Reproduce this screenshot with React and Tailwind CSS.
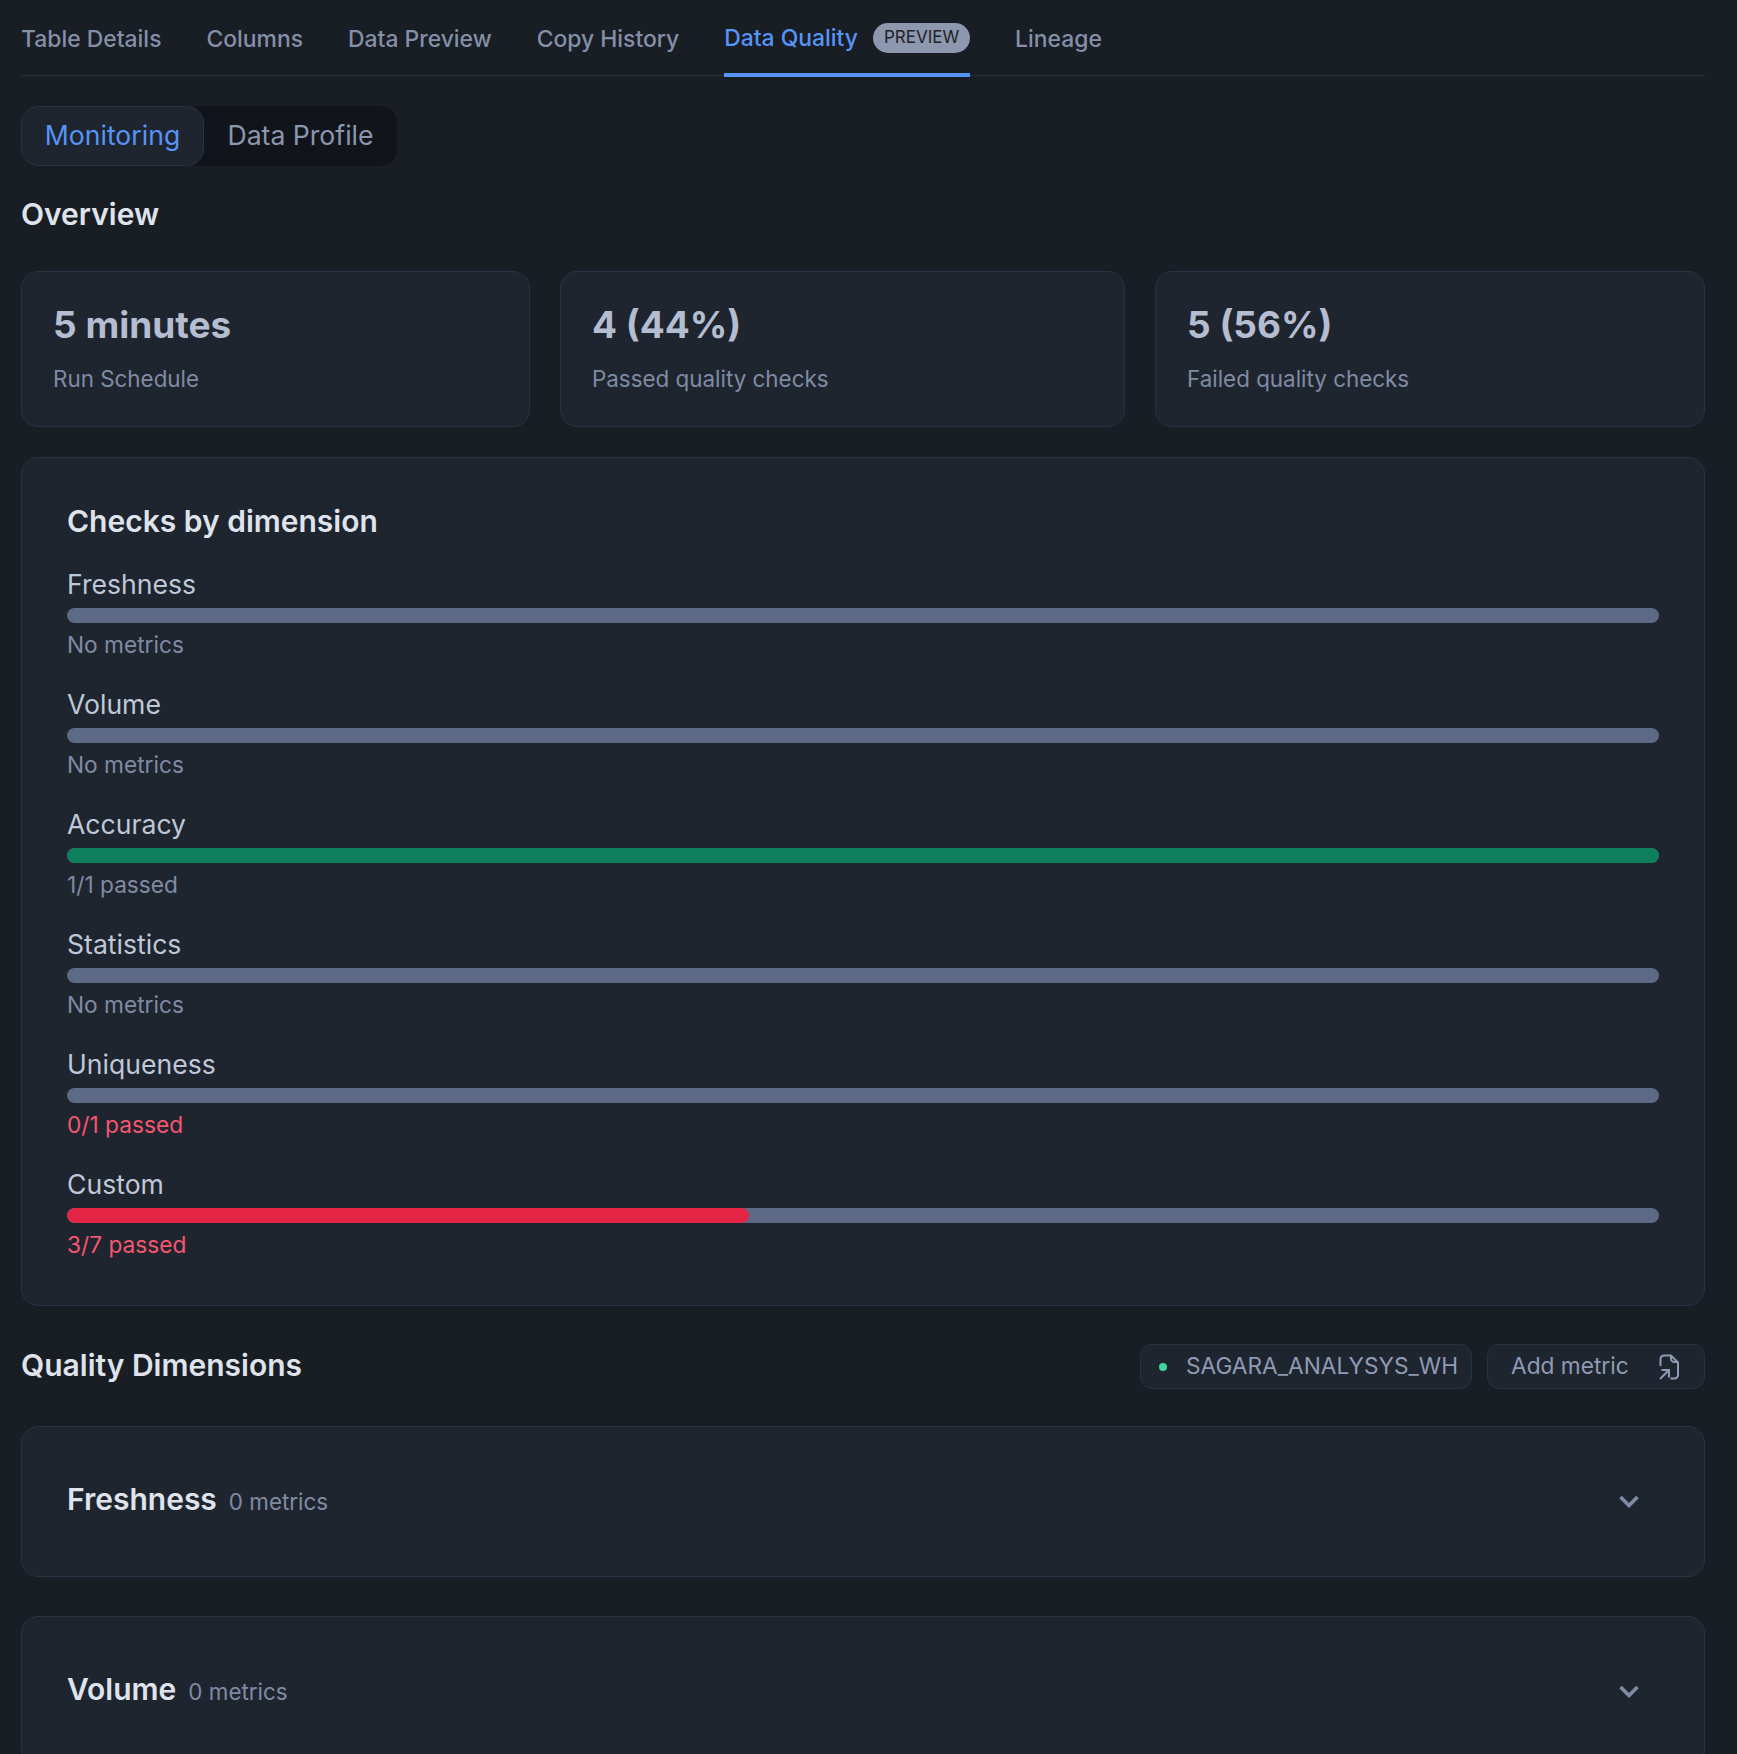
import React from 'react'

const tabs = ['Table Details', 'Columns', 'Data Preview', 'Copy History']

const stats = [
  { value: '5 minutes', label: 'Run Schedule', width: 'w-[509px]' },
  { value: '4 (44%)', label: 'Passed quality checks', width: 'w-[565px]' },
  { value: '5 (56%)', label: 'Failed quality checks', width: 'flex-1' }
]

const dimensions = [
  { name: 'Freshness', note: 'No metrics' },
  { name: 'Volume', note: 'No metrics' },
  { name: 'Accuracy', note: '1/1 passed', fill: 100, color: 'bg-[#0d7f5c]' },
  { name: 'Statistics', note: 'No metrics' },
  { name: 'Uniqueness', note: '0/1 passed', failed: true },
  { name: 'Custom', note: '3/7 passed', failed: true, fill: 42.86, color: 'bg-[#e42545]' }
]

const DimensionRow = ({ name, note, fill, color, failed }) => (
  <div>
    <div className="text-[26.6px] leading-[26px] text-[#bfc8d8]">{name}</div>
    <div className="mt-[11px] h-[15px] rounded-full bg-[#5c6a85] overflow-hidden">
      {fill && <div className={`h-full rounded-full ${color}`} style={{ width: `${fill}%` }} />}
    </div>
    <div className={`mt-[9px] text-[22.7px] leading-[26px] ${failed ? 'text-[#f4566f]' : 'text-[#7f8ba3]'}`}>{note}</div>
  </div>
)

const MetricSection = ({ name, count }) => (
  <section className="h-[151px] mb-[39px] rounded-[17px] border border-[#2a3142] bg-[#1f252f] pl-[45px] pr-[65px] flex items-center justify-between">
    <div className="flex items-baseline gap-[12px] pb-[5px]">
      <h3 className="text-[30px] leading-[40px] font-semibold text-[#dfe3ec]">{name}</h3>
      <span className="text-[22.4px] text-[#7f8ba3]">{count} metrics</span>
    </div>
    <svg width="20" height="13" viewBox="0 0 20 13" fill="none" stroke="#7f8aa3" strokeWidth="3.6">
      <path d="M1.500 2l8.500 8.500L18.500 2" />
    </svg>
  </section>
)

export default function App() {
  return (
    <div className="h-[1754px] overflow-hidden bg-[#191d24] pl-[21px] pr-[32px] font-['Inter',sans-serif]">
      {/* Top tabs */}
      <div className="flex h-[76px] gap-[45px] border-b border-[#2b303b] text-[22.9px] font-medium text-[#8390a8]">
        {tabs.map((tab) => (
          <div key={tab} className="flex h-[77px] items-center pt-[2px]">{tab}</div>
        ))}
        <div className="flex h-[77px] items-center gap-[15px] border-b-4 border-[#5794f7] pt-[4px] text-[#5794f7]">
          Data Quality
          <span className="-mt-[2px] flex h-[30px] w-[97px] items-center justify-center rounded-full bg-[#8d97ad] text-[17px] font-normal text-[#1d222b]">
            PREVIEW
          </span>
        </div>
        <div className="flex h-[77px] items-center pt-[2px]">Lineage</div>
      </div>

      {/* Sub tabs */}
      <div className="mt-[30px] flex h-[60px] w-[376px] rounded-[17px] bg-[#11151b] text-[26.6px]">
        <div className="flex w-[183px] items-center justify-center rounded-[17px] border border-[#2a3142] bg-[#1f252f] text-[#5794f7]">
          Monitoring
        </div>
        <div className="flex flex-1 items-center justify-center text-[#8c97ad]">Data Profile</div>
      </div>

      <h2 className="mt-[28px] mb-[37px] text-[30px] leading-[40px] font-semibold text-[#dfe3ec]">Overview</h2>

      <div className="flex gap-[30px]">
        {stats.map((stat) => (
          <div key={stat.label} className={`${stat.width} h-[156px] rounded-[17px] border border-[#2a3142] bg-[#1f252f] pt-[33px] pl-[31px]`}>
            <div className="text-[37px] leading-[40px] font-bold text-[#b5bdd0]">{stat.value}</div>
            <div className="mt-[20px] text-[22.4px] leading-[28px] text-[#7f8ba3]">{stat.label}</div>
          </div>
        ))}
      </div>

      {/* Checks by dimension */}
      <div className="mt-[30px] rounded-[17px] border border-[#2a3142] bg-[#1f252f] px-[45px] pt-[43px] pb-[47px]">
        <h2 className="mb-[30px] text-[30px] leading-[40px] font-semibold text-[#dfe3ec]">Checks by dimension</h2>
        <div className="flex flex-col gap-[33px]">
          {dimensions.map((d) => (
            <DimensionRow key={d.name} {...d} />
          ))}
        </div>
      </div>

      {/* Quality dimensions */}
      <div className="mt-[38px] mb-[37px] flex h-[45px] items-center justify-between">
        <h2 className="pb-[3px] text-[30px] leading-[40px] font-semibold text-[#dfe3ec]">Quality Dimensions</h2>
        <div className="flex gap-[15px] text-[22.7px] text-[#8f9bb5]">
          <div className="flex h-[45px] w-[332px] items-center rounded-[12px] border border-[#2a3142] bg-[#1f252f] pl-[18px]">
            <span className="h-[8px] w-[8px] shrink-0 rounded-full bg-[#3fd6a0]" />
            <span className="ml-[19px]">SAGARA_ANALYSYS_WH</span>
          </div>
          <div className="flex h-[45px] w-[218px] items-center rounded-[12px] border border-[#2a3142] bg-[#1f252f] pl-[23px]">
            <span>Add metric</span>
            <svg className="ml-[28px] shrink-0" width="24" height="26" viewBox="0 0 24 26" fill="none" stroke="#8f9bb5" strokeWidth="2">
              <path d="M3.500 12V5a3.500 3.500 0 0 1 3.500-3.500h7l7 7V21a3.500 3.500 0 0 1-3.500 3.500h-4" />
              <path d="M14 1.500v3a3.500 3.500 0 0 0 3.500 3.500h3.500" />
              <path d="M3 25l8-8M4.500 16H12v7.500" />
            </svg>
          </div>
        </div>
      </div>

      <MetricSection name="Freshness" count={0} />
      <MetricSection name="Volume" count={0} />
    </div>
  )
}
